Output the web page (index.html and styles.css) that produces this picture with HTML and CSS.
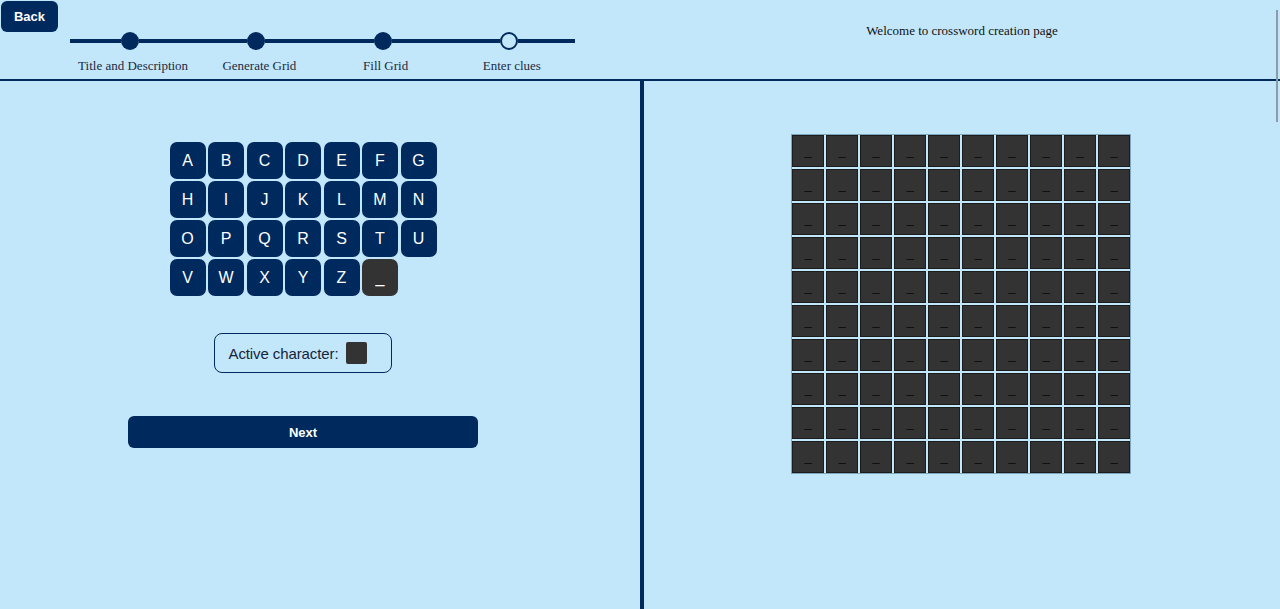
FILE: index.html
```html
<!DOCTYPE html>
<html>
<head>
<meta charset="utf-8">
<title>Crossword creation</title>
<link rel="stylesheet" href="styles.css">
</head>
<body>
<div class="page">
  <header class="header">
    <div class="header-left">
      <button class="back">Back</button>
      <div class="progress">
        <div class="step">
          <div class="track"><span class="seg seg-l"></span><span class="dot"></span><span class="seg seg-r"></span></div>
          <div class="label">Title and Description</div>
        </div>
        <div class="step">
          <div class="track"><span class="seg seg-l"></span><span class="dot"></span><span class="seg seg-r"></span></div>
          <div class="label">Generate Grid</div>
        </div>
        <div class="step">
          <div class="track"><span class="seg seg-l"></span><span class="dot"></span><span class="seg seg-r"></span></div>
          <div class="label">Fill Grid</div>
        </div>
        <div class="step">
          <div class="track"><span class="seg seg-l"></span><span class="dot dot-open"></span><span class="seg seg-r"></span></div>
          <div class="label">Enter clues</div>
        </div>
      </div>
    </div>
    <div class="header-right">
      <p class="welcome">Welcome to crossword creation page</p>
    </div>
  </header>
  <main class="main">
    <section class="left">
      <div class="left-col">
        <div class="keyboard" id="keyboard"></div>
        <div class="active-box">
          <span class="active-label">Active character:</span>
          <span class="active-swatch"></span>
        </div>
        <button class="next">Next</button>
      </div>
    </section>
    <section class="right">
      <div class="grid" id="grid"></div>
    </section>
  </main>
  <div class="edge-line"></div>
</div>
<script>
  var kb = document.getElementById('keyboard');
  var letters = 'ABCDEFGHIJKLMNOPQRSTUVWXYZ'.split('');
  letters.forEach(function (l) {
    var b = document.createElement('button');
    b.className = 'key';
    b.textContent = l;
    kb.appendChild(b);
  });
  var blank = document.createElement('button');
  blank.className = 'key key-blank';
  blank.textContent = '_';
  kb.appendChild(blank);

  var grid = document.getElementById('grid');
  for (var i = 0; i < 100; i++) {
    var c = document.createElement('div');
    c.className = 'cell';
    c.textContent = '_';
    grid.appendChild(c);
  }
</script>
</body>
</html>
```

FILE: styles.css
```css
html, body {
  margin: 0;
  padding: 0;
}

body {
  background: #c3e7fa;
  font-family: "Liberation Serif", "Times New Roman", serif;
  width: 1280px;
  height: 609px;
  overflow: hidden;
}

.page {
  position: relative;
  height: 609px;
  display: flex;
  flex-direction: column;
}

.header {
  display: flex;
  height: 79px;
  border-bottom: 2px solid #002a5e;
  flex: none;
}

.header-left {
  width: 644px;
  padding: 1px 0 0 1px;
  box-sizing: border-box;
}

.back {
  display: block;
  width: 57px;
  height: 31px;
  border: none;
  border-radius: 6px;
  background: #002a5e;
  color: #ffffff;
  font-family: "Liberation Sans", Arial, sans-serif;
  font-weight: bold;
  font-size: 13px;
  padding: 0;
  cursor: pointer;
}

.progress {
  display: flex;
  width: 505px;
  margin-left: 69px;
}

.step {
  flex: 1 1 0;
  display: flex;
  flex-direction: column;
  align-items: center;
}

.track {
  display: flex;
  align-items: center;
  width: 100%;
  height: 18px;
}

.seg {
  height: 4px;
  background: #002a5e;
}

.seg-l {
  flex: 1 1 0;
}

.seg-r {
  flex: 1 1 6px;
}

.dot {
  flex: none;
  width: 18px;
  height: 18px;
  border-radius: 50%;
  background: #002a5e;
  box-sizing: border-box;
}

.dot-open {
  background: #c3e7fa;
  border: 2px solid #002a5e;
}

.label {
  margin-top: 8px;
  font-size: 13px;
  line-height: 15px;
  color: #1b2a3e;
  white-space: nowrap;
}

.header-right {
  flex: 1;
  text-align: center;
}

.welcome {
  margin: 23px 0 0 0;
  font-size: 13px;
  line-height: 15px;
  color: #111111;
}

.main {
  flex: 1;
  display: flex;
}

.left {
  width: 644px;
  border-right: 4px solid #002a5e;
  box-sizing: border-box;
  flex: none;
}

.left-col {
  width: 350px;
  margin-left: 128px;
  padding-top: 61px;
  display: flex;
  flex-direction: column;
  align-items: center;
}

.keyboard {
  display: grid;
  grid-template-columns: repeat(7, 36px);
  grid-auto-rows: 37px;
  column-gap: 2.5px;
  row-gap: 2px;
}

.key {
  border: none;
  border-radius: 7px;
  background: #002a5e;
  color: #ffffff;
  font-family: "Liberation Sans", Arial, sans-serif;
  font-size: 16px;
  padding: 0;
  cursor: pointer;
}

.key-blank {
  background: #333333;
}

.active-box {
  margin-top: 37px;
  display: flex;
  align-items: center;
  height: 40px;
  box-sizing: border-box;
  padding: 0 24px 0 13px;
  border: 1.5px solid #002a5e;
  border-radius: 8px;
}

.active-label {
  font-family: "Liberation Sans", Arial, sans-serif;
  font-size: 15px;
  color: #13243d;
  letter-spacing: -0.1px;
}

.active-swatch {
  width: 21px;
  height: 22px;
  margin-left: 7px;
  background: #333333;
  border-radius: 2px;
}

.next {
  margin-top: 43px;
  width: 350px;
  height: 32px;
  border: none;
  border-radius: 6px;
  background: #002a5e;
  color: #ffffff;
  font-family: "Liberation Sans", Arial, sans-serif;
  font-weight: bold;
  font-size: 13px;
  padding: 0;
  cursor: pointer;
}

.right {
  flex: 1;
  display: flex;
  justify-content: center;
  align-items: flex-start;
  padding: 53px 2px 0 0;
}

.grid {
  display: grid;
  grid-template-columns: repeat(10, 32px);
  grid-auto-rows: 32px;
  gap: 2px;
  border: 1px solid #7fa4bd;
}

.cell {
  background: #333333;
  border: 1px solid #1c1c1c;
  box-sizing: border-box;
  color: #0a0a0a;
  font-family: "Liberation Sans", Arial, sans-serif;
  font-size: 13px;
  line-height: 30px;
  text-align: center;
}

.edge-line {
  position: absolute;
  top: 10px;
  right: 2px;
  width: 2px;
  height: 112px;
  background: #8b9ba8;
}
```
